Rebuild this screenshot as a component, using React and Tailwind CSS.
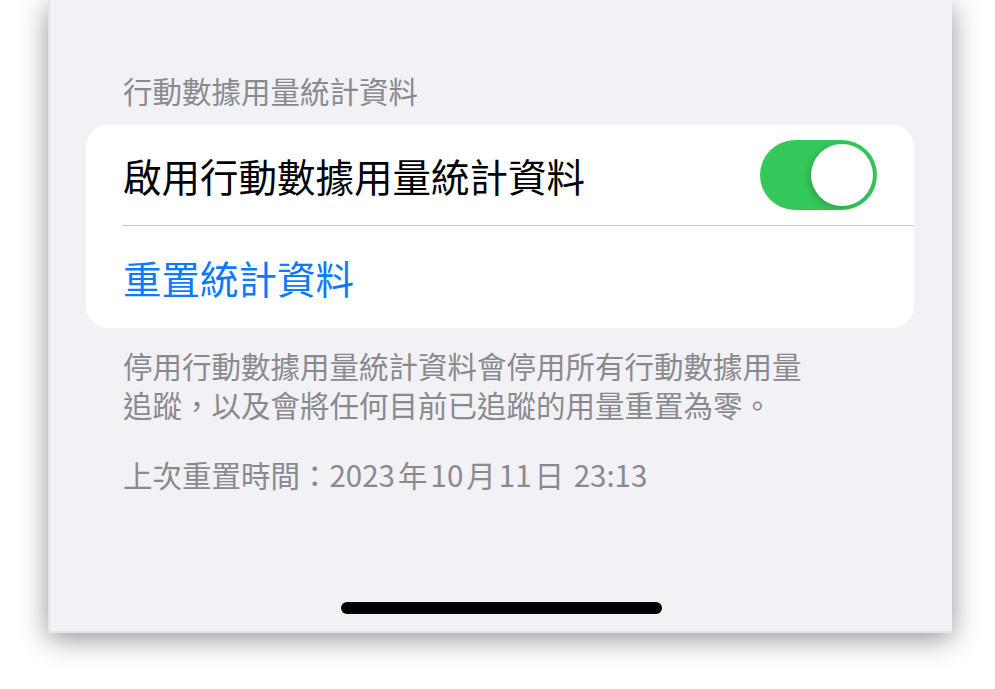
import React from 'react';

const cjk = { fontFamily: '"Noto Sans CJK TC", "Noto Sans", sans-serif' };

const Toggle = ({ on }) => (
  <div
    className={`w-[117px] h-[70px] rounded-full flex items-center px-[4px] ${
      on ? 'bg-[#34c759] justify-end' : 'bg-[#e9e9eb] justify-start'
    }`}
  >
    <div className="w-[62px] h-[62px] rounded-full bg-white shadow-[-2px_2px_6px_rgba(0,0,0,0.18)]" />
  </div>
);

const App = () => {
  return (
    <div className="w-[995px] h-[689px] bg-white overflow-hidden" style={cjk}>
      <div className="ml-[48px] w-[904px] h-[633px] bg-[#f1f1f6] border-l-2 border-b-2 border-[#e4e4e9] shadow-[0_6px_26px_rgba(0,0,0,0.42)] flex flex-col">
        {/* section header */}
        <div className="pt-[70px] pl-[73px] text-[29.5px] leading-[40px] text-[#8a8a8e]">
          行動數據用量統計資料
        </div>

        {/* card */}
        <div className="mt-[15px] ml-[36px] mr-[38px] bg-white rounded-[22px] overflow-hidden">
          <div className="pl-[37px]">
            <div className="h-[101px] flex items-center justify-between pr-[37px] border-b border-[#c8c8cc]">
              <span className="text-[38.5px] text-black leading-none">啟用行動數據用量統計資料</span>
              <Toggle on />
            </div>
          </div>
          <div className="h-[102px] flex items-center pl-[37px]">
            <span className="text-[38.5px] text-[#0a7aff] leading-none">重置統計資料</span>
          </div>
        </div>

        {/* footer */}
        <div className="mt-[18px] pl-[73px] pr-[140px] text-[29.5px] leading-[38.5px] text-[#8a8a8e]">
          <p>停用行動數據用量統計資料會停用所有行動數據用量</p>
          <p>追蹤，以及會將任何目前已追蹤的用量重置為零。</p>
        </div>
        <div className="mt-[32px] pl-[73px] text-[29.5px] leading-[38.5px] text-[#8a8a8e]">
          上次重置時間：2023<span className="mx-[3px]">年</span>10<span className="mx-[3px]">月</span>11<span className="ml-[3px] mr-[3px]">日</span> 23:13
        </div>

        {/* home indicator */}
        <div className="mt-auto mb-[17px] flex justify-center">
          <div className="w-[321px] h-[12px] rounded-full bg-black" />
        </div>
      </div>
    </div>
  );
};

export default App;
